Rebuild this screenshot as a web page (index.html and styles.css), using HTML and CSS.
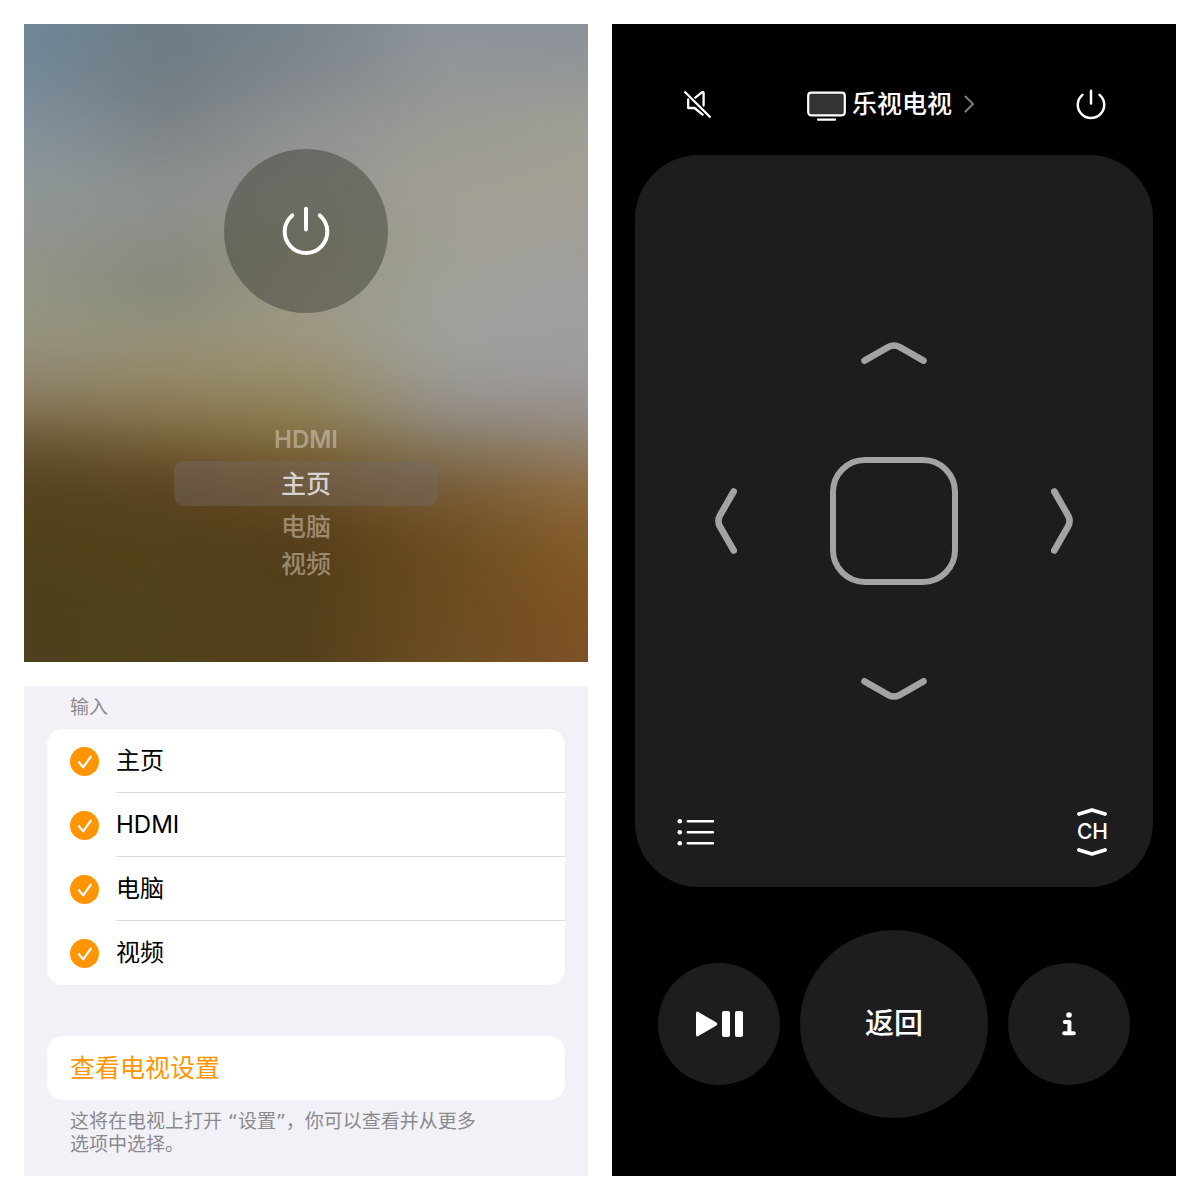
FILE: index.html
```html
<!DOCTYPE html>
<html lang="zh-CN">
<head>
<meta charset="utf-8">
<meta name="viewport" content="width=device-width, initial-scale=1">
<title>电视遥控</title>
<link rel="stylesheet" href="styles.css">
</head>
<body>
<svg class="sprite" aria-hidden="true">
  <symbol id="power" viewBox="0 0 48 50">
    <path d="M24 2.8V23.4M10.2 9.4A21.3 21.3 0 1 0 37.8 9.4" fill="none" stroke="currentColor" stroke-width="4" stroke-linecap="round"/>
  </symbol>
  <symbol id="tick" viewBox="0 0 29 29">
    <path d="M9 15.2L13.2 20.4L20.8 9.6" fill="none" stroke="#fff" stroke-width="2.2" stroke-linecap="round" stroke-linejoin="round"/>
  </symbol>
</svg>
<main class="board">
  <div class="column">
    <section class="tv" aria-label="电视">
      <div class="wash" aria-hidden="true">
        <i class="wash-a"></i><i class="wash-b"></i><i class="wash-c"></i><i class="wash-d"></i><i class="wash-e"></i>
      </div>
      <div class="tv-content">
        <button class="tv-power" type="button" aria-label="电源"><svg width="48" height="50"><use href="#power"/></svg></button>
        <div class="picker" role="radiogroup" aria-label="输入源">
          <label class="option latin"><input type="radio" name="source">HDMI</label>
          <label class="option selected"><input type="radio" name="source" checked>主页</label>
          <label class="option"><input type="radio" name="source">电脑</label>
          <label class="option last"><input type="radio" name="source">视频</label>
        </div>
      </div>
    </section>
    <section class="settings">
      <h2 class="caption">输入</h2>
      <div class="card">
        <label class="row"><span class="check"><input type="checkbox" checked><svg><use href="#tick"/></svg></span><span class="name">主页</span></label>
        <label class="row"><span class="check"><input type="checkbox" checked><svg><use href="#tick"/></svg></span><span class="name">HDMI</span></label>
        <label class="row"><span class="check"><input type="checkbox" checked><svg><use href="#tick"/></svg></span><span class="name">电脑</span></label>
        <label class="row"><span class="check"><input type="checkbox" checked><svg><use href="#tick"/></svg></span><span class="name">视频</span></label>
      </div>
      <button class="card link-card" type="button">查看电视设置</button>
      <p class="note">这将在电视上打开 “设置”，你可以查看并从更多选项中选择。</p>
    </section>
  </div>

  <section class="remote" aria-label="遥控器">
    <header class="topbar">
      <button type="button" aria-label="静音">
        <svg width="27" height="27" viewBox="0 0 27 27" fill="none" stroke="currentColor" stroke-width="2.3" stroke-linecap="round" stroke-linejoin="round">
          <path d="M1.2 1.2L25.8 25.8M4.2 8.5V17H10.5L18.6 23.6M11.3 6.6L18.2 1.2Q19.6 .6 19.6 2V14.6"/>
        </svg>
      </button>
      <button class="device" type="button">
        <svg width="39" height="34" viewBox="0 0 39 34">
          <rect x="1.2" y="5.7" width="36.6" height="22.6" rx="3" fill="#333" stroke="currentColor" stroke-width="2.2"/>
          <path d="M11 32.7H28" stroke="currentColor" stroke-width="2.2" stroke-linecap="round"/>
        </svg>
        <span>乐视电视</span>
        <svg class="more" width="16" height="18" viewBox="0 0 16 18"><path d="M1.5 1.5L9 9L1.5 16.5" fill="none" stroke="#7d7d82" stroke-width="2" stroke-linecap="round" stroke-linejoin="round"/></svg>
      </button>
      <button type="button" aria-label="电源"><svg width="30" height="31"><use href="#power"/></svg></button>
    </header>

    <div class="pad">
      <div class="dpad">
        <button class="up" type="button" aria-label="上"><svg width="66" height="22" viewBox="0 0 66 22"><path d="M3.5 18.7L27.5 4.9Q33 2 38.5 4.9L62.5 18.7"/></svg></button>
        <button class="left" type="button" aria-label="左"><svg width="22" height="66" viewBox="0 0 22 66"><path d="M18.7 3.5L4.9 27.5Q2 33 4.9 38.5L18.7 62.5"/></svg></button>
        <button class="ok" type="button" aria-label="确定"></button>
        <button class="right" type="button" aria-label="右"><svg width="22" height="66" viewBox="0 0 22 66"><path d="M3.3 3.5L17.1 27.5Q20 33 17.1 38.5L3.3 62.5"/></svg></button>
        <button class="down" type="button" aria-label="下"><svg width="66" height="22" viewBox="0 0 66 22"><path d="M3.5 3.3L27.5 17.1Q33 20 38.5 17.1L62.5 3.3"/></svg></button>
      </div>
      <div class="pad-footer">
        <button type="button" aria-label="列表">
          <svg width="38" height="28" viewBox="0 0 38 28" fill="currentColor" stroke="currentColor">
            <g stroke="none"><circle cx="2.8" cy="3.2" r="2.3"/><circle cx="2.8" cy="14.2" r="2.3"/><circle cx="2.8" cy="25.2" r="2.3"/></g>
            <path d="M10.7 3.2H36M10.7 14.2H36M10.7 25.2H36" stroke-width="2.4" stroke-linecap="round"/>
          </svg>
        </button>
        <button class="channel" type="button">
          <svg width="30" height="8" viewBox="0 0 30 8"><path d="M2 6L15 2L28 6"/></svg>
          <span>CH</span>
          <svg width="30" height="8" viewBox="0 0 30 8"><path d="M2 2L15 6L28 2"/></svg>
        </button>
      </div>
    </div>

    <footer class="actions">
      <button class="round" type="button" aria-label="播放或暂停">
        <svg width="48" height="26" viewBox="0 0 48 26" fill="currentColor">
          <path d="M1 2.2Q1 -.2 3.4 1L21.4 11.6Q23.4 13 21.4 14.4L3.4 25Q1 26.2 1 23.8Z"/>
          <rect x="27" y="0" width="8" height="26" rx="2"/><rect x="40" y="0" width="8" height="26" rx="2"/>
        </svg>
      </button>
      <button class="round back" type="button">返回</button>
      <button class="round" type="button" aria-label="信息">
        <svg width="14" height="24" viewBox="0 0 14 24">
          <circle cx="7" cy="3" r="2.8" fill="currentColor"/>
          <path d="M2.8 10H7.4V21M2.2 21.3H11.8" fill="none" stroke="currentColor" stroke-width="4" stroke-linecap="round" stroke-linejoin="round"/>
        </svg>
      </button>
    </footer>
  </section>
</main>
</body>
</html>
```
FILE: styles.css
```css
* {
  box-sizing: border-box;
}

body {
  margin: 0;
  background: #fff;
  font-family: Inter, "Noto Sans CJK SC", sans-serif;
  font-size: 25px;
  line-height: 30px;
}

button {
  margin: 0;
  padding: 0;
  border: 0;
  background: none;
  color: inherit;
  font: inherit;
  cursor: pointer;
}

svg {
  display: block;
}

.sprite {
  display: none;
}

.board {
  display: grid;
  grid-template-columns: 1fr 1fr;
  gap: 24px;
  min-height: 100vh;
  padding: 24px;
}

.column {
  display: flex;
  flex-direction: column;
  gap: 24px;
}

/* Television screen */
.tv {
  display: grid;
  flex: 1;
  overflow: hidden;
  color: #fff;
}

.wash,
.tv-content {
  grid-area: 1 / 1;
}

.wash {
  display: grid;
  margin: -40px;
  filter: blur(18px);
}

.wash i {
  grid-area: 1 / 1;
}

.wash-a {
  background: linear-gradient(#6c8796 0%, #748998 13%, #84919b 20%, #8f9797 29%, #92958c 37%, #969580 47%, #928b77 53%, #857759 59%, #66542f 64%, #55431f 70%, #50421a 78%, #4d401b 89%, #50401e 100%);
}

.wash-b {
  background: linear-gradient(#697c87 0%, #727c83 13%, #7c8286 20%, #8d9290 29%, #8b8c83 37%, #87887c 42%, #91907a 47%, #978d70 53%, #8a7b54 59%, #755f38 64%, #5a431f 70%, #52421b 78%, #4f421b 89%, #53421f 100%);
  mask-image: linear-gradient(to right, transparent 6%, #000 28%);
}

.wash-c {
  background: linear-gradient(#76838c 0%, #81878c 13%, #8f9393 20%, #969590 29%, #95937f 37%, #9d9985 47%, #9a9173 53%, #8f8358 59%, #7f6b3f 64%, #684d22 70%, #553d1a 78%, #51401a 85%, #573f1c 100%);
  mask-image: linear-gradient(to right, transparent 28%, #000 50%);
}

.wash-d {
  background: linear-gradient(#8a929d 0%, #929798 13%, #9b9b94 20%, #a3a096 29%, #a1a096 37%, #a0a19e 47%, #9d9d98 53%, #96908a 59%, #857961 64%, #775d38 70%, #6c4d1f 78%, #6c4c20 89%, #6f5029 100%);
  mask-image: linear-gradient(to right, transparent 50%, #000 72%);
}

.wash-e {
  background: linear-gradient(#868e9b 0%, #939697 13%, #a1a095 20%, #a39f95 29%, #a19e9a 37%, #a09fa1 47%, #9e9c9d 53%, #989290 59%, #91826f 64%, #8e6c42 70%, #855b2a 78%, #7f5324 87%, #7d4f24 100%);
  mask-image: linear-gradient(to right, transparent 72%, #000 94%);
}

.tv-content {
  z-index: 1;
  display: flex;
  flex-direction: column;
  align-items: center;
  gap: 106px;
  padding: 125px 24px 82px;
}

.tv-power {
  display: grid;
  place-items: center;
  width: 164px;
  height: 164px;
  border-radius: 50%;
  background: rgba(60, 60, 52, 0.47);
}

.picker {
  display: flex;
  flex-direction: column;
  width: 264px;
  font-weight: 500;
}

.option {
  display: flex;
  align-items: center;
  justify-content: center;
  height: 42px;
  color: rgba(222, 212, 198, 0.5);
}

.option input {
  appearance: none;
  width: 0;
  height: 0;
  margin: 0;
}

.option.latin {
  font-size: 24px;
  font-weight: 600;
}

.option.selected {
  height: 45px;
  border-radius: 10px;
  background: rgba(118, 108, 104, 0.4);
  color: #d8d3cf;
}

.option.last {
  height: 32px;
}

/* Input settings */
.settings {
  padding: 10px 23px 20px;
  background: #f2f1f7;
}

.caption,
.note {
  margin: 0;
  padding-left: 23px;
  color: #8a8a8e;
  font-size: 19px;
  font-weight: 400;
  line-height: 23px;
}

.card {
  display: block;
  width: 100%;
  margin-top: 10px;
  border-radius: 16px;
  background: #fff;
  color: #000;
}

.row {
  display: flex;
  gap: 17px;
  align-items: center;
  height: 64px;
  padding-left: 23px;
  font-size: 24px;
}

.check {
  display: grid;
}

.check input,
.check svg {
  grid-area: 1 / 1;
  width: 29px;
  height: 29px;
  margin: 0;
}

.check input {
  appearance: none;
  border-radius: 50%;
  background: #ff9500;
}

.check svg {
  z-index: 1;
  pointer-events: none;
}

.name {
  flex: 1;
  border-bottom: 1px solid #dcdcde;
  line-height: 63px;
}

.row:last-child .name {
  border-color: transparent;
}

.link-card {
  height: 64px;
  margin-top: 51px;
  padding-left: 23px;
  color: #ff9500;
  text-align: left;
}

.note {
  max-width: 440px;
  margin-top: 10px;
  font-family: "DejaVu Sans", "Noto Sans CJK SC", sans-serif;
}

/* Remote */
.remote {
  display: flex;
  flex-direction: column;
  padding: 58px 23px;
  background: #000;
  color: #fff;
}

.topbar {
  display: flex;
  align-items: center;
  justify-content: space-between;
  height: 44px;
  margin-bottom: 29px;
  padding: 0 47px 0 49px;
}

.device {
  display: flex;
  align-items: center;
  gap: 6px;
  font-weight: 500;
}

.more {
  margin-left: 6px;
}

.pad {
  display: grid;
  flex: 1;
  grid-template-rows: 1fr auto 1fr;
  border-radius: 64px;
  background: #1d1d1f;
}

.dpad {
  display: grid;
  grid-row: 2;
  grid-template-areas: ". up ." "left ok right" ". down .";
  gap: 93px;
  place-content: center;
  place-items: center;
}

.up { grid-area: up; }
.left { grid-area: left; }
.right { grid-area: right; }
.down { grid-area: down; }

.dpad path {
  fill: none;
  stroke: #a3a3a3;
  stroke-width: 6.6;
  stroke-linecap: round;
}

.ok {
  grid-area: ok;
  width: 128px;
  height: 128px;
  border: 6px solid #a3a3a3;
  border-radius: 35px;
}

.pad-footer {
  display: flex;
  grid-row: 3;
  align-items: center;
  align-self: end;
  justify-content: space-between;
  padding: 0 45px 31px 42px;
}

.channel {
  display: flex;
  flex-direction: column;
  align-items: center;
  font-size: 21px;
  font-weight: 500;
  line-height: 32px;
}

.channel path {
  fill: none;
  stroke: currentColor;
  stroke-width: 3.8;
  stroke-linecap: round;
  stroke-linejoin: round;
}

.actions {
  display: flex;
  gap: 20px;
  align-items: center;
  justify-content: center;
  margin-top: 43px;
}

.round {
  display: grid;
  place-items: center;
  width: 122px;
  height: 122px;
  border-radius: 50%;
  background: #1d1d1f;
}

.round.back {
  width: 188px;
  height: 188px;
  font-size: 29px;
  font-weight: 500;
}
```
